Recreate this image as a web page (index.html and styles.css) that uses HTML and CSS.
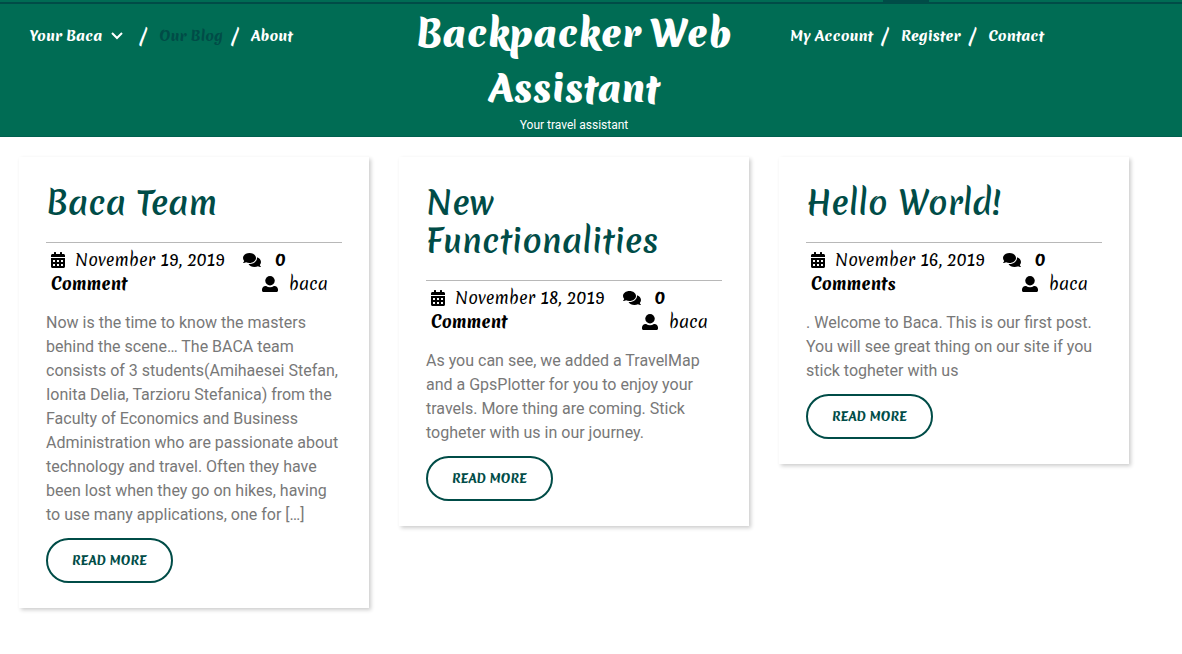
FILE: index.html
```html
<!DOCTYPE html>
<html lang="en">
<head>
<meta charset="utf-8">
<meta name="viewport" content="width=device-width, initial-scale=1">
<title>Backpacker Web Assistant</title>
<link rel="stylesheet" href="styles.css">
</head>
<body>
<svg class="sprite" aria-hidden="true">
  <symbol id="calendar" viewBox="0 0 448 512"><path d="M0 464c0 26.500 21.500 48 48 48h352c26.500 0 48-21.500 48-48V192H0v272zm320-196c0-6.600 5.400-12 12-12h40c6.600 0 12 5.400 12 12v40c0 6.600-5.400 12-12 12h-40c-6.600 0-12-5.400-12-12v-40zm0 128c0-6.600 5.400-12 12-12h40c6.600 0 12 5.400 12 12v40c0 6.600-5.400 12-12 12h-40c-6.600 0-12-5.400-12-12v-40zM192 268c0-6.600 5.400-12 12-12h40c6.600 0 12 5.400 12 12v40c0 6.600-5.400 12-12 12h-40c-6.600 0-12-5.400-12-12v-40zm0 128c0-6.600 5.400-12 12-12h40c6.600 0 12 5.400 12 12v40c0 6.600-5.400 12-12 12h-40c-6.600 0-12-5.400-12-12v-40zM64 268c0-6.600 5.400-12 12-12h40c6.600 0 12 5.400 12 12v40c0 6.600-5.400 12-12 12H76c-6.600 0-12-5.400-12-12v-40zm0 128c0-6.600 5.400-12 12-12h40c6.600 0 12 5.400 12 12v40c0 6.600-5.400 12-12 12H76c-6.600 0-12-5.400-12-12v-40zM400 64h-48V16c0-8.800-7.200-16-16-16h-32c-8.800 0-16 7.200-16 16v48H160V16c0-8.800-7.200-16-16-16h-32c-8.800 0-16 7.200-16 16v48H48C21.500 64 0 85.500 0 112v48h448v-48c0-26.500-21.500-48-48-48z"/></symbol>
  <symbol id="comments" viewBox="0 0 576 512"><path d="M416 192c0-88.400-93.100-160-208-160S0 103.600 0 192c0 34.300 14.100 65.900 38 92-13.400 30.200-35.500 54.200-35.800 54.500-2.200 2.300-2.800 5.700-1.500 8.700S4.800 352 8 352c36.600 0 66.900-12.300 88.700-25 32.200 15.700 70.300 25 111.300 25 114.900 0 208-71.600 208-160zm122 220c23.900-26 38-57.700 38-92 0-66.900-53.500-124.200-129.300-148.100.9 6.600 1.300 13.300 1.300 20.100 0 105.900-107.700 192-240 192-10.800 0-21.300-.8-31.700-1.900C207.800 439.600 281.800 480 368 480c41 0 79.100-9.200 111.300-25 21.800 12.700 52.100 25 88.700 25 3.200 0 6.100-1.900 7.300-4.800 1.300-2.900.7-6.300-1.500-8.700-.3-.3-22.400-24.200-35.800-54.500z"/></symbol>
  <symbol id="user" viewBox="0 0 512 512"><circle cx="256" cy="152" r="152"/><path d="M0 464v-30c0-64 50-114 114-114h18c36 26 78 38 124 38s88-12 124-38h18c64 0 114 50 114 114v30c0 27-21 48-48 48H48c-27 0-48-21-48-48z"/></symbol>
</svg>

<header class="header">
  <div class="topbar"><span class="topbar-tab"></span></div>
  <div class="header-inner columns">
    <nav class="nav" aria-label="Primary">
      <a class="nav-parent" href="#">Your Baca
        <svg class="chevron" viewBox="0 0 12 8" aria-hidden="true"><path d="M1 1l5 5 5-5"/></svg></a>
      <span class="slash">/</span>
      <a class="current" href="#">Our Blog</a>
      <span class="slash">/</span>
      <a href="#">About</a>
    </nav>
    <div class="brand">
      <h1><a href="#">Backpacker Web Assistant</a></h1>
      <p>Your travel assistant</p>
    </div>
    <nav class="nav" aria-label="Account">
      <a href="#">My Account</a>
      <span class="slash">/</span>
      <a href="#">Register</a>
      <span class="slash">/</span>
      <a href="#">Contact</a>
    </nav>
  </div>
</header>

<main class="posts columns">
  <article class="card">
    <h2><a href="#">Baca Team</a></h2>
    <div class="meta">
      <svg class="icon calendar" aria-hidden="true"><use href="#calendar"/></svg><span class="date">November 19, 2019</span><svg class="icon comments" aria-hidden="true"><use href="#comments"/></svg><a class="count" href="#"><span>0</span> <span>Comment</span></a>
      <span class="author"><svg class="icon user" aria-hidden="true"><use href="#user"/></svg>baca</span>
    </div>
    <p class="excerpt">Now is the time to know the masters behind the scene… The BACA team consists of 3 students(Amihaesei Stefan, Ionita Delia, Tarzioru Stefanica) from the Faculty of Economics and Business Administration who are passionate about technology and travel. Often they have been lost when they go on hikes, having to use many applications, one for […]</p>
    <a class="more" href="#">READ MORE</a>
  </article>
  <article class="card">
    <h2><a href="#">New Functionalities</a></h2>
    <div class="meta">
      <svg class="icon calendar" aria-hidden="true"><use href="#calendar"/></svg><span class="date">November 18, 2019</span><svg class="icon comments" aria-hidden="true"><use href="#comments"/></svg><a class="count" href="#"><span>0</span> <span>Comment</span></a>
      <span class="author"><svg class="icon user" aria-hidden="true"><use href="#user"/></svg>baca</span>
    </div>
    <p class="excerpt">As you can see, we added a TravelMap and a GpsPlotter for you to enjoy your travels. More thing are coming. Stick togheter with us in our journey.</p>
    <a class="more" href="#">READ MORE</a>
  </article>
  <article class="card">
    <h2><a href="#">Hello World!</a></h2>
    <div class="meta">
      <svg class="icon calendar" aria-hidden="true"><use href="#calendar"/></svg><span class="date">November 16, 2019</span><svg class="icon comments" aria-hidden="true"><use href="#comments"/></svg><a class="count" href="#"><span>0</span> <span>Comments</span></a>
      <span class="author"><svg class="icon user" aria-hidden="true"><use href="#user"/></svg>baca</span>
    </div>
    <p class="excerpt">. Welcome to Baca. This is our first post. You will see great thing on our site if you stick togheter with us</p>
    <a class="more" href="#">READ MORE</a>
  </article>
</main>
</body>
</html>
```
FILE: styles.css
```css
:root {
  --green: #006c54;
  --dark: #004c47;
  --script: "Merienda", Lato, sans-serif;
}

* { box-sizing: border-box; }

body {
  margin: 0;
  background: #fff;
  color: #787878;
  font: 16px/24px Roboto, sans-serif;
}

a { color: inherit; text-decoration: none; }
h1, h2, p { margin: 0; }
.sprite { display: none; }

.columns {
  display: grid;
  grid-template-columns: repeat(3, minmax(0, 1fr));
  gap: 30px;
  padding: 0 53px 0 19px;
  align-items: start;
}

.header {
  background: var(--green);
  color: #fff;
  border-bottom: 1px solid #00604f;
}

.topbar {
  display: flex;
  justify-content: flex-end;
  height: 4px;
  padding-right: 253px;
  border-bottom: 2px solid var(--dark);
}

.topbar-tab { width: 46px; background: var(--dark); }

.nav {
  display: flex;
  align-items: center;
  padding: 20px 0 0 11px;
  font: 800 14px/24px var(--script);
  white-space: nowrap;
}

.nav-parent { display: flex; align-items: center; gap: 9px; margin-right: 8px; }
.current { color: var(--dark); }
.slash { width: 28px; padding-left: 8px; font-size: 18px; font-weight: 700; }

.chevron {
  width: 12px;
  height: 8px;
  fill: none;
  stroke: currentColor;
  stroke-width: 2;
}

.brand { padding-top: 2px; text-align: center; }
.brand h1 { font: 900 36px/55px var(--script); }
.brand p { padding-bottom: 2px; font-size: 12px; line-height: 18px; }

.posts { padding-top: 20px; padding-bottom: 46px; }

.card {
  padding: 27px 27px 25px;
  background: #fff;
  box-shadow: 2px 2px 4px rgba(0, 0, 0, 0.2);
}

.card h2 {
  padding-bottom: 20px;
  border-bottom: 1px solid #b8b8b8;
  color: var(--dark);
  font: 600 32px/38px var(--script);
}

.meta {
  padding: 5px 5px 6px;
  color: #000;
  font: 400 16px/24px var(--script);
}

.icon { height: 16px; fill: currentColor; vertical-align: -2px; }
.calendar { width: 14px; margin-right: 10px; }
.comments { width: 18px; margin: 0 14px 0 18px; }
.user { width: 16px; margin-right: 11px; }
.count { font-weight: 800; }
.author { float: right; margin-right: 9px; }

.excerpt { padding-top: 9px; }

.more {
  display: inline-block;
  margin-top: 11px;
  padding: 0 24px;
  border: 2px solid var(--dark);
  border-radius: 24px;
  color: var(--dark);
  font: 800 12px/41px var(--script);
  vertical-align: top;
}

@media (max-width: 900px) {
  .columns { grid-template-columns: minmax(0, 1fr); padding-right: 19px; }
}
```
